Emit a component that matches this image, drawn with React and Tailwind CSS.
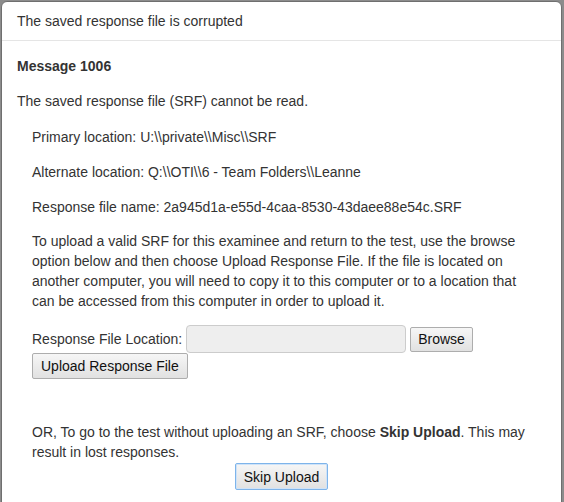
import React from "react";

// Modal: corrupted saved response file
const Line = ({ children, className = "" }) => (
  <p className={`leading-5 ${className}`}>{children}</p>
);

export default function App() {
  return (
    <div
      className="h-[502px] w-[564px] overflow-hidden bg-[#8c8c8c] pt-px pl-px text-[14px] text-[#333]"
      style={{ fontFamily: '"Liberation Sans", Arial, sans-serif' }}
    >
      <div className="h-[520px] w-[561px] rounded-md border border-[#6f6f6f] bg-white">
        <div className="border-b border-[#e5e5e5] px-[15px] pt-[9px] pb-[9px]">
          <Line>The saved response file is corrupted</Line>
        </div>

        <div className="px-[15px] pt-[15px]">
          <Line className="font-bold">Message 1006</Line>
          <Line className="mt-[15px]">The saved response file (SRF) cannot be read.</Line>

          <div className="px-[15px]">
            <Line className="mt-[16px]">Primary location: U:\\private\\Misc\\SRF</Line>
            <Line className="mt-[15px]">Alternate location: Q:\\OTI\\6 - Team Folders\\Leanne</Line>
            <Line className="mt-[15px]">Response file name: 2a945d1a-e55d-4caa-8530-43daee88e54c.SRF</Line>
            <Line className="mt-[14px]">
              To upload a valid SRF for this examinee and return to the test, use the browse
              option below and then choose Upload Response File. If the file is located on
              another computer, you will need to copy it to this computer or to a location that
              can be accessed from this computer in order to upload it.
            </Line>

            <div className="mt-[14px] flex items-center">
              <span className="leading-5">Response File Location:</span>
              <div className="ml-[4px] h-[28px] w-[220px] rounded-[4px] border border-[#ccc] bg-[#eee]" />
              <button className="ml-[4px] h-[25px] rounded-[2px] border border-[#adadad] bg-gradient-to-b from-[#f6f6f6] to-[#e1e1e1] px-[7px] leading-5 text-[#111]">
                Browse
              </button>
            </div>
            <button className="h-[26px] rounded-[2px] border border-[#adadad] bg-gradient-to-b from-[#f6f6f6] to-[#e1e1e1] px-[8px] leading-5 text-[#111]">
              Upload Response File
            </button>

            <Line className="mt-[43px]">
              OR, To go to the test without uploading an SRF, choose <b>Skip Upload</b>. This may
              result in lost responses.
            </Line>
          </div>

          <div className="mt-px flex justify-center">
            <button className="h-[27px] rounded-[2px] border border-[#7eb4ea] bg-gradient-to-b from-[#f6f6f6] to-[#e1e1e1] px-[8px] leading-5 text-[#111] shadow-[inset_0_0_0_1px_#cfe3f8]">
              Skip Upload
            </button>
          </div>
        </div>
      </div>
    </div>
  );
}
